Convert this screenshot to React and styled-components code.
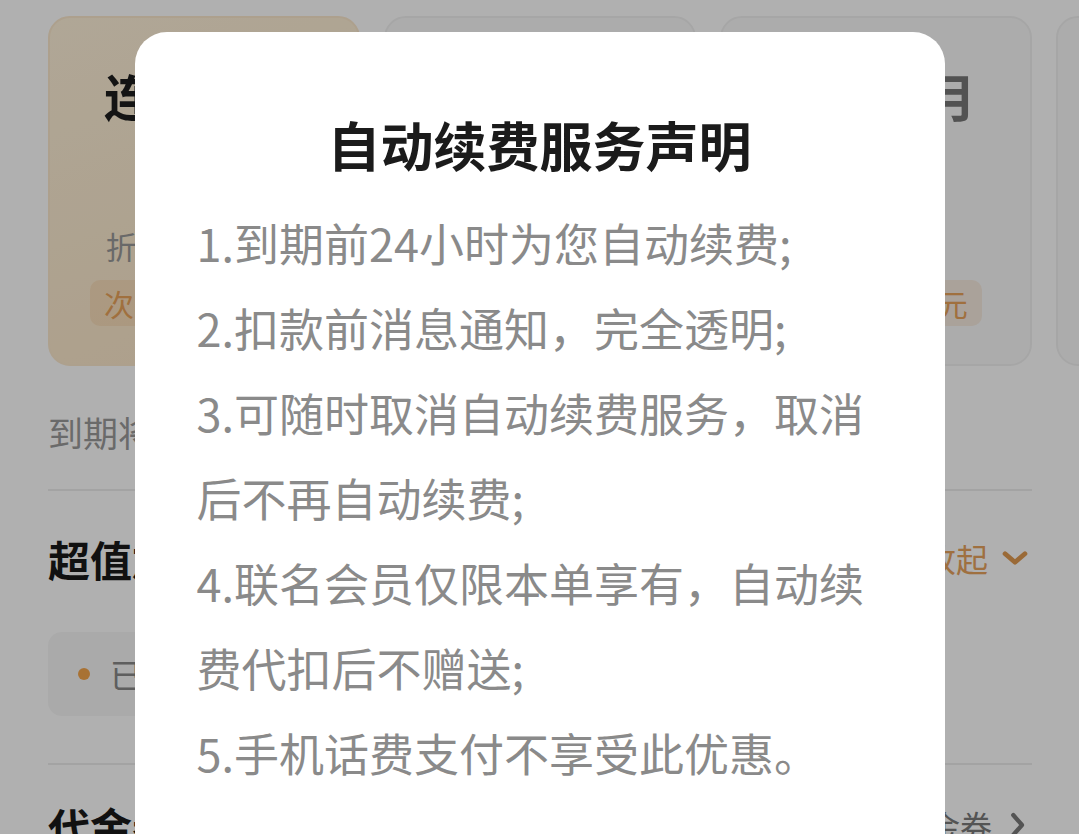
import React from "react";
import styled, { createGlobalStyle } from "styled-components";

const GlobalStyle = createGlobalStyle`
  html, body {
    margin: 0;
    padding: 0;
    background: #ffffff;
  }
  * {
    box-sizing: border-box;
  }
  body {
    font-family: "Noto Sans CJK SC", "Noto Sans", sans-serif;
  }
`;

const Screen = styled.div`
  position: relative;
  width: 1079px;
  height: 834px;
  overflow: hidden;
  background: #ffffff;
`;

const Page = styled.div`
  padding: 16px 47px 0 48px;
`;

const CardRow = styled.div`
  display: flex;
  gap: 24px;
  width: 1200px;
`;

const Card = styled.div`
  flex: 0 0 312px;
  height: 350px;
  border-radius: 22px;
  display: flex;
  flex-direction: column;
  align-items: center;
  padding-top: 42px;
  background: ${(p) =>
    p.$active ? "linear-gradient(160deg, #fff2da 0%, #fbe6c8 100%)" : "#fafafa"};
  border: 2px solid ${(p) => (p.$active ? "#fbe8cc" : "#f1f1f1")};
`;

const CardTitle = styled.div`
  font-size: 50px;
  font-weight: 700;
  line-height: 70px;
  color: ${(p) => (p.$active ? "#1e1e1e" : "#777777")};
`;

const CardPrice = styled.div`
  height: 94px;
  font-size: 56px;
  font-weight: 700;
  line-height: 94px;
  color: #e59a4c;
`;

const CardNote = styled.div`
  height: 44px;
  font-size: 31px;
  line-height: 44px;
  color: #999999;
`;

const CardTag = styled.div`
  margin-top: 12px;
  height: 46px;
  padding: 0 14px;
  border-radius: 10px;
  font-size: 30px;
  line-height: 46px;
  color: #e8a25a;
  background: rgba(228, 150, 70, 0.14);
`;

const Hint = styled.div`
  margin-top: 43px;
  font-size: 35px;
  line-height: 46px;
  color: #9a9a9a;
`;

const Divider = styled.div`
  height: 2px;
  background: #ececec;
  margin-top: ${(p) => p.$top}px;
`;

const SectionHead = styled.div`
  display: flex;
  align-items: center;
  justify-content: space-between;
  margin-top: ${(p) => p.$top}px;
  height: 60px;
`;

const SectionTitle = styled.div`
  font-size: 42px;
  font-weight: 700;
  color: #1a1a1a;
`;

const SectionLink = styled.div`
  display: flex;
  align-items: center;
  gap: 10px;
  font-size: 32px;
  color: ${(p) => p.$color};
`;

const InfoBox = styled.div`
  margin-top: 44px;
  width: fit-content;
  height: 84px;
  border-radius: 14px;
  background: #f7f7f7;
  display: flex;
  align-items: center;
  padding: 0 30px;
  gap: 20px;
  font-size: 33px;
  color: #888888;
`;

const Dot = styled.span`
  width: 12px;
  height: 12px;
  border-radius: 50%;
  background: #f4a64c;
`;

const Mask = styled.div`
  position: absolute;
  inset: 0;
  background: rgba(0, 0, 0, 0.31);
`;

const Dialog = styled.div`
  position: absolute;
  top: 32px;
  left: 50%;
  transform: translateX(-50%);
  width: 810px;
  height: 900px;
  border-radius: 32px;
  background: #ffffff;
  padding: 76px 62px 0 62px;
`;

const DialogTitle = styled.h2`
  margin: 0;
  text-align: center;
  font-size: 53px;
  font-weight: 700;
  line-height: 72px;
  color: #1b1b1b;
`;

const Terms = styled.div`
  margin-top: 20px;
`;

const Term = styled.p`
  margin: 0;
  font-size: 45px;
  line-height: 85px;
  color: #8a8a8a;
`;

const Chevron = ({ dir, color, size }) => (
  <svg width={size} height={size} viewBox="0 0 24 24" fill="none">
    <path
      d={dir === "down" ? "M5 9l7 6 7-6" : "M9 4l7 8-7 8"}
      stroke={color}
      strokeWidth="3.4"
      strokeLinecap="round"
      strokeLinejoin="round"
    />
  </svg>
);

const plans = [
  { name: "连续包年", price: "¥258", note: "折合21.5元/月", tag: "次年续费178元", active: true },
  { name: "连续包季", price: "¥68", note: "折合22.6元/月", tag: "次季续费68元" },
  { name: "连续包月", price: "¥25", note: "", tag: "次月续费25元" },
  { name: "1个月", price: "¥30", note: "", tag: "" },
];

const terms = [
  "1.到期前24小时为您自动续费;",
  "2.扣款前消息通知，完全透明;",
  "3.可随时取消自动续费服务，取消后不再自动续费;",
  "4.联名会员仅限本单享有，自动续费代扣后不赠送;",
  "5.手机话费支付不享受此优惠。",
];

export default function App() {
  return (
    <Screen>
      <GlobalStyle />
      <Page>
        <CardRow>
          {plans.map((p) => (
            <Card key={p.name} $active={p.active}>
              <CardTitle $active={p.active}>{p.name}</CardTitle>
              <CardPrice>{p.price}</CardPrice>
              <CardNote>{p.note}</CardNote>
              {p.tag && <CardTag>{p.tag}</CardTag>}
            </Card>
          ))}
        </CardRow>
        <Hint>到期将自动续费，可随时取消</Hint>
        <Divider $top={34} />
        <SectionHead $top={37}>
          <SectionTitle>超值加购</SectionTitle>
          <SectionLink $color="#e6a25e">
            收起
            <Chevron dir="down" color="#e09a50" size={34} />
          </SectionLink>
        </SectionHead>
        <InfoBox>
          <Dot />
          已选择加购联名会员
        </InfoBox>
        <Divider $top={47} />
        <SectionHead $top={30}>
          <SectionTitle>代金券</SectionTitle>
          <SectionLink $color="#7a7a7a">
            无可用代金券
            <Chevron dir="right" color="#7a7a7a" size={30} />
          </SectionLink>
        </SectionHead>
      </Page>
      <Mask />
      <Dialog>
        <DialogTitle>自动续费服务声明</DialogTitle>
        <Terms>
          {terms.map((t) => (
            <Term key={t}>{t}</Term>
          ))}
        </Terms>
      </Dialog>
    </Screen>
  );
}
